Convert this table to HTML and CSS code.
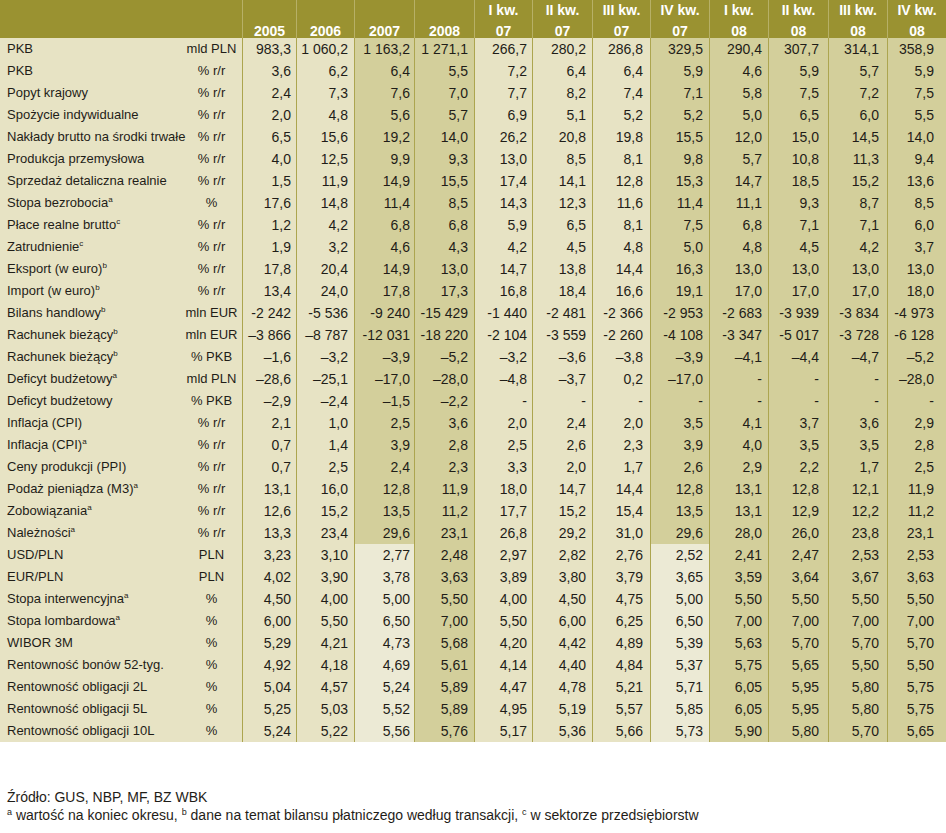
FILE: index.html
```html
<!DOCTYPE html>
<html lang="pl">
<head>
<meta charset="utf-8">
<title>Prognozy makroekonomiczne</title>
<link rel="stylesheet" href="styles.css">
</head>
<body>
<table class="macro">
<colgroup>
<col class="w-label"><col class="w-unit">
<col class="w-54"><col class="w-58"><col class="w-60"><col class="w-60">
<col class="w-58"><col class="w-60"><col class="w-58"><col class="w-59">
<col class="w-59"><col class="w-60"><col class="w-59"><col class="w-59">
</colgroup>
<thead>
<tr>
<th class="h-label" colspan="2"></th>
<th><span class="hd">2005</span></th><th><span class="hd">2006</span></th><th><span class="hd">2007</span></th><th><span class="hd">2008</span></th>
<th><span class="hd">I kw.<br>07</span></th><th><span class="hd">II kw.<br>07</span></th><th><span class="hd">III kw.<br>07</span></th><th><span class="hd">IV kw.<br>07</span></th>
<th><span class="hd">I kw.<br>08</span></th><th><span class="hd">II kw.<br>08</span></th><th><span class="hd">III kw.<br>08</span></th><th><span class="hd">IV kw.<br>08</span></th>
</tr>
</thead>
<tbody class="g-macro">
<tr><td class="lbl">PKB</td><td class="unit">mld PLN</td><td>983,3</td><td>1&nbsp;060,2</td><td>1&nbsp;163,2</td><td>1&nbsp;271,1</td><td>266,7</td><td>280,2</td><td>286,8</td><td>329,5</td><td>290,4</td><td>307,7</td><td>314,1</td><td>358,9</td></tr>
<tr><td class="lbl">PKB</td><td class="unit">% r/r</td><td>3,6</td><td>6,2</td><td>6,4</td><td>5,5</td><td>7,2</td><td>6,4</td><td>6,4</td><td>5,9</td><td>4,6</td><td>5,9</td><td>5,7</td><td>5,9</td></tr>
<tr><td class="lbl">Popyt krajowy</td><td class="unit">% r/r</td><td>2,4</td><td>7,3</td><td>7,6</td><td>7,0</td><td>7,7</td><td>8,2</td><td>7,4</td><td>7,1</td><td>5,8</td><td>7,5</td><td>7,2</td><td>7,5</td></tr>
<tr><td class="lbl">Spożycie indywidualne</td><td class="unit">% r/r</td><td>2,0</td><td>4,8</td><td>5,6</td><td>5,7</td><td>6,9</td><td>5,1</td><td>5,2</td><td>5,2</td><td>5,0</td><td>6,5</td><td>6,0</td><td>5,5</td></tr>
<tr><td class="lbl">Nakłady brutto na środki trwałe</td><td class="unit">% r/r</td><td>6,5</td><td>15,6</td><td>19,2</td><td>14,0</td><td>26,2</td><td>20,8</td><td>19,8</td><td>15,5</td><td>12,0</td><td>15,0</td><td>14,5</td><td>14,0</td></tr>
<tr><td class="lbl">Produkcja przemysłowa</td><td class="unit">% r/r</td><td>4,0</td><td>12,5</td><td>9,9</td><td>9,3</td><td>13,0</td><td>8,5</td><td>8,1</td><td>9,8</td><td>5,7</td><td>10,8</td><td>11,3</td><td>9,4</td></tr>
<tr><td class="lbl">Sprzedaż detaliczna realnie</td><td class="unit">% r/r</td><td>1,5</td><td>11,9</td><td>14,9</td><td>15,5</td><td>17,4</td><td>14,1</td><td>12,8</td><td>15,3</td><td>14,7</td><td>18,5</td><td>15,2</td><td>13,6</td></tr>
<tr><td class="lbl">Stopa bezrobocia<sup class="fn">a</sup></td><td class="unit">%</td><td>17,6</td><td>14,8</td><td>11,4</td><td>8,5</td><td>14,3</td><td>12,3</td><td>11,6</td><td>11,4</td><td>11,1</td><td>9,3</td><td>8,7</td><td>8,5</td></tr>
<tr><td class="lbl">Płace realne brutto<sup class="fn">c</sup></td><td class="unit">% r/r</td><td>1,2</td><td>4,2</td><td>6,8</td><td>6,8</td><td>5,9</td><td>6,5</td><td>8,1</td><td>7,5</td><td>6,8</td><td>7,1</td><td>7,1</td><td>6,0</td></tr>
<tr><td class="lbl">Zatrudnienie<sup class="fn">c</sup></td><td class="unit">% r/r</td><td>1,9</td><td>3,2</td><td>4,6</td><td>4,3</td><td>4,2</td><td>4,5</td><td>4,8</td><td>5,0</td><td>4,8</td><td>4,5</td><td>4,2</td><td>3,7</td></tr>
<tr><td class="lbl">Eksport (w euro)<sup class="fn">b</sup></td><td class="unit">% r/r</td><td>17,8</td><td>20,4</td><td>14,9</td><td>13,0</td><td>14,7</td><td>13,8</td><td>14,4</td><td>16,3</td><td>13,0</td><td>13,0</td><td>13,0</td><td>13,0</td></tr>
<tr><td class="lbl">Import (w euro)<sup class="fn">b</sup></td><td class="unit">% r/r</td><td>13,4</td><td>24,0</td><td>17,8</td><td>17,3</td><td>16,8</td><td>18,4</td><td>16,6</td><td>19,1</td><td>17,0</td><td>17,0</td><td>17,0</td><td>18,0</td></tr>
<tr><td class="lbl">Bilans handlowy<sup class="fn">b</sup></td><td class="unit">mln EUR</td><td>-2&nbsp;242</td><td>-5&nbsp;536</td><td>-9&nbsp;240</td><td>-15&nbsp;429</td><td>-1&nbsp;440</td><td>-2&nbsp;481</td><td>-2&nbsp;366</td><td>-2&nbsp;953</td><td>-2&nbsp;683</td><td>-3&nbsp;939</td><td>-3&nbsp;834</td><td>-4&nbsp;973</td></tr>
<tr><td class="lbl">Rachunek bieżący<sup class="fn">b</sup></td><td class="unit">mln EUR</td><td>–3&nbsp;866</td><td>–8&nbsp;787</td><td>-12&nbsp;031</td><td>-18&nbsp;220</td><td>-2&nbsp;104</td><td>-3&nbsp;559</td><td>-2&nbsp;260</td><td>-4&nbsp;108</td><td>-3&nbsp;347</td><td>-5&nbsp;017</td><td>-3&nbsp;728</td><td>-6&nbsp;128</td></tr>
<tr><td class="lbl">Rachunek bieżący<sup class="fn">b</sup></td><td class="unit">% PKB</td><td>–1,6</td><td>–3,2</td><td>–3,9</td><td>–5,2</td><td>–3,2</td><td>–3,6</td><td>–3,8</td><td>–3,9</td><td>–4,1</td><td>–4,4</td><td>–4,7</td><td>–5,2</td></tr>
<tr><td class="lbl">Deficyt budżetowy<sup class="fn">a</sup></td><td class="unit">mld PLN</td><td>–28,6</td><td>–25,1</td><td>–17,0</td><td>–28,0</td><td>–4,8</td><td>–3,7</td><td>0,2</td><td>–17,0</td><td>-</td><td>-</td><td>-</td><td>–28,0</td></tr>
<tr><td class="lbl">Deficyt budżetowy</td><td class="unit">% PKB</td><td>–2,9</td><td>–2,4</td><td>–1,5</td><td>–2,2</td><td>-</td><td>-</td><td>-</td><td>-</td><td>-</td><td>-</td><td>-</td><td>-</td></tr>
<tr><td class="lbl">Inflacja (CPI)</td><td class="unit">% r/r</td><td>2,1</td><td>1,0</td><td>2,5</td><td>3,6</td><td>2,0</td><td>2,4</td><td>2,0</td><td>3,5</td><td>4,1</td><td>3,7</td><td>3,6</td><td>2,9</td></tr>
<tr><td class="lbl">Inflacja (CPI)<sup class="fn">a</sup></td><td class="unit">% r/r</td><td>0,7</td><td>1,4</td><td>3,9</td><td>2,8</td><td>2,5</td><td>2,6</td><td>2,3</td><td>3,9</td><td>4,0</td><td>3,5</td><td>3,5</td><td>2,8</td></tr>
<tr><td class="lbl">Ceny produkcji (PPI)</td><td class="unit">% r/r</td><td>0,7</td><td>2,5</td><td>2,4</td><td>2,3</td><td>3,3</td><td>2,0</td><td>1,7</td><td>2,6</td><td>2,9</td><td>2,2</td><td>1,7</td><td>2,5</td></tr>
<tr><td class="lbl">Podaż pieniądza (M3)<sup class="fn">a</sup></td><td class="unit">% r/r</td><td>13,1</td><td>16,0</td><td>12,8</td><td>11,9</td><td>18,0</td><td>14,7</td><td>14,4</td><td>12,8</td><td>13,1</td><td>12,8</td><td>12,1</td><td>11,9</td></tr>
<tr><td class="lbl">Zobowiązania<sup class="fn">a</sup></td><td class="unit">% r/r</td><td>12,6</td><td>15,2</td><td>13,5</td><td>11,2</td><td>17,7</td><td>15,2</td><td>15,4</td><td>13,5</td><td>13,1</td><td>12,9</td><td>12,2</td><td>11,2</td></tr>
<tr><td class="lbl">Należności<sup class="fn">a</sup></td><td class="unit">% r/r</td><td>13,3</td><td>23,4</td><td>29,6</td><td>23,1</td><td>26,8</td><td>29,2</td><td>31,0</td><td>29,6</td><td>28,0</td><td>26,0</td><td>23,8</td><td>23,1</td></tr>
</tbody>
<tbody class="g-market">
<tr><td class="lbl">USD/PLN</td><td class="unit">PLN</td><td>3,23</td><td>3,10</td><td>2,77</td><td>2,48</td><td>2,97</td><td>2,82</td><td>2,76</td><td>2,52</td><td>2,41</td><td>2,47</td><td>2,53</td><td>2,53</td></tr>
<tr><td class="lbl">EUR/PLN</td><td class="unit">PLN</td><td>4,02</td><td>3,90</td><td>3,78</td><td>3,63</td><td>3,89</td><td>3,80</td><td>3,79</td><td>3,65</td><td>3,59</td><td>3,64</td><td>3,67</td><td>3,63</td></tr>
<tr><td class="lbl">Stopa interwencyjna<sup class="fn">a</sup></td><td class="unit">%</td><td>4,50</td><td>4,00</td><td>5,00</td><td>5,50</td><td>4,00</td><td>4,50</td><td>4,75</td><td>5,00</td><td>5,50</td><td>5,50</td><td>5,50</td><td>5,50</td></tr>
<tr><td class="lbl">Stopa lombardowa<sup class="fn">a</sup></td><td class="unit">%</td><td>6,00</td><td>5,50</td><td>6,50</td><td>7,00</td><td>5,50</td><td>6,00</td><td>6,25</td><td>6,50</td><td>7,00</td><td>7,00</td><td>7,00</td><td>7,00</td></tr>
<tr><td class="lbl">WIBOR 3M</td><td class="unit">%</td><td>5,29</td><td>4,21</td><td>4,73</td><td>5,68</td><td>4,20</td><td>4,42</td><td>4,89</td><td>5,39</td><td>5,63</td><td>5,70</td><td>5,70</td><td>5,70</td></tr>
<tr><td class="lbl">Rentowność bonów 52-tyg.</td><td class="unit">%</td><td>4,92</td><td>4,18</td><td>4,69</td><td>5,61</td><td>4,14</td><td>4,40</td><td>4,84</td><td>5,37</td><td>5,75</td><td>5,65</td><td>5,50</td><td>5,50</td></tr>
<tr><td class="lbl">Rentowność obligacji 2L</td><td class="unit">%</td><td>5,04</td><td>4,57</td><td>5,24</td><td>5,89</td><td>4,47</td><td>4,78</td><td>5,21</td><td>5,71</td><td>6,05</td><td>5,95</td><td>5,80</td><td>5,75</td></tr>
<tr><td class="lbl">Rentowność obligacji 5L</td><td class="unit">%</td><td>5,25</td><td>5,03</td><td>5,52</td><td>5,89</td><td>4,95</td><td>5,19</td><td>5,57</td><td>5,85</td><td>6,05</td><td>5,95</td><td>5,80</td><td>5,75</td></tr>
<tr><td class="lbl">Rentowność obligacji 10L</td><td class="unit">%</td><td>5,24</td><td>5,22</td><td>5,56</td><td>5,76</td><td>5,17</td><td>5,36</td><td>5,66</td><td>5,73</td><td>5,90</td><td>5,80</td><td>5,70</td><td>5,65</td></tr>
</tbody>
</table>
<div class="notes">
<p class="note">Źródło: GUS, NBP, MF, BZ WBK</p>
<p class="note"><sup class="fn">a</sup> wartość na koniec okresu, <sup class="fn">b</sup> dane na temat bilansu płatniczego według transakcji, <sup class="fn">c</sup> w sektorze przedsiębiorstw</p>
</div>
</body>
</html>
```
FILE: styles.css
```css
* { box-sizing: border-box; }

body {
  margin: 0;
  background: #ffffff;
  color: #1f1d18;
  font-family: "Liberation Sans", Arial, sans-serif;
  font-size: 13px;
}

.macro {
  width: 946px;
  table-layout: fixed;
  border-collapse: separate;
  border-spacing: 0;
}

.w-label { width: 181px; }
.w-unit { width: 61px; }
.w-54 { width: 54px; }
.w-58 { width: 58px; }
.w-59 { width: 59px; }
.w-60 { width: 60px; }

.macro th {
  height: 38px;
  padding: 0;
  background: #9a9231;
  color: #ffffff;
  font-weight: bold;
  font-size: 14px;
  text-align: center;
  vertical-align: bottom;
  border-left: 1px solid #b7b067;
}

.macro th.h-label { border-left: 0; }

.hd {
  display: block;
  line-height: 21px;
  margin-bottom: -4px;
}

.macro td {
  height: 22px;
  padding: 0 6px 0 0;
  line-height: 22px;
  font-size: 14px;
  white-space: nowrap;
  text-align: right;
  background: #e7e3c4;
  border-left: 1px solid #aca54f;
}

.macro td.lbl {
  padding-left: 7px;
  font-size: 13px;
  text-align: left;
  border-left: 0;
}

.macro td.unit {
  padding: 0;
  font-size: 13px;
  text-align: center;
  border-left: 0;
}

/* per-column right indent of the figures */
.macro td:nth-child(3) { padding-right: 5px; }
.macro td:nth-child(5) { padding-right: 4px; }
.macro td:nth-child(7) { padding-right: 5px; }
.macro td:nth-child(9) { padding-right: 7px; }
.macro td:nth-child(12) { padding-right: 9px; }
.macro td:nth-child(13) { padding-right: 8px; }
.macro td:nth-child(14) { padding-right: 12px; }

/* forecast columns */
.macro td:nth-child(6),
.macro td:nth-child(n+11),
.g-macro td:nth-child(5),
.g-macro td:nth-child(10) {
  background: #d3cf9b;
}

/* market rows: 2007 and IV kw. 07 are already known */
.g-market td:nth-child(5),
.g-market td:nth-child(10) {
  background: #ecead5;
}

.fn {
  font-size: 8px;
  line-height: 0;
  vertical-align: 5px;
}

.notes {
  margin-top: 46px;
  padding-left: 7px;
}

.note {
  margin: 0;
  line-height: 18px;
  font-size: 14px;
}

.note .fn {
  font-size: 9px;
  vertical-align: 5px;
}
```
